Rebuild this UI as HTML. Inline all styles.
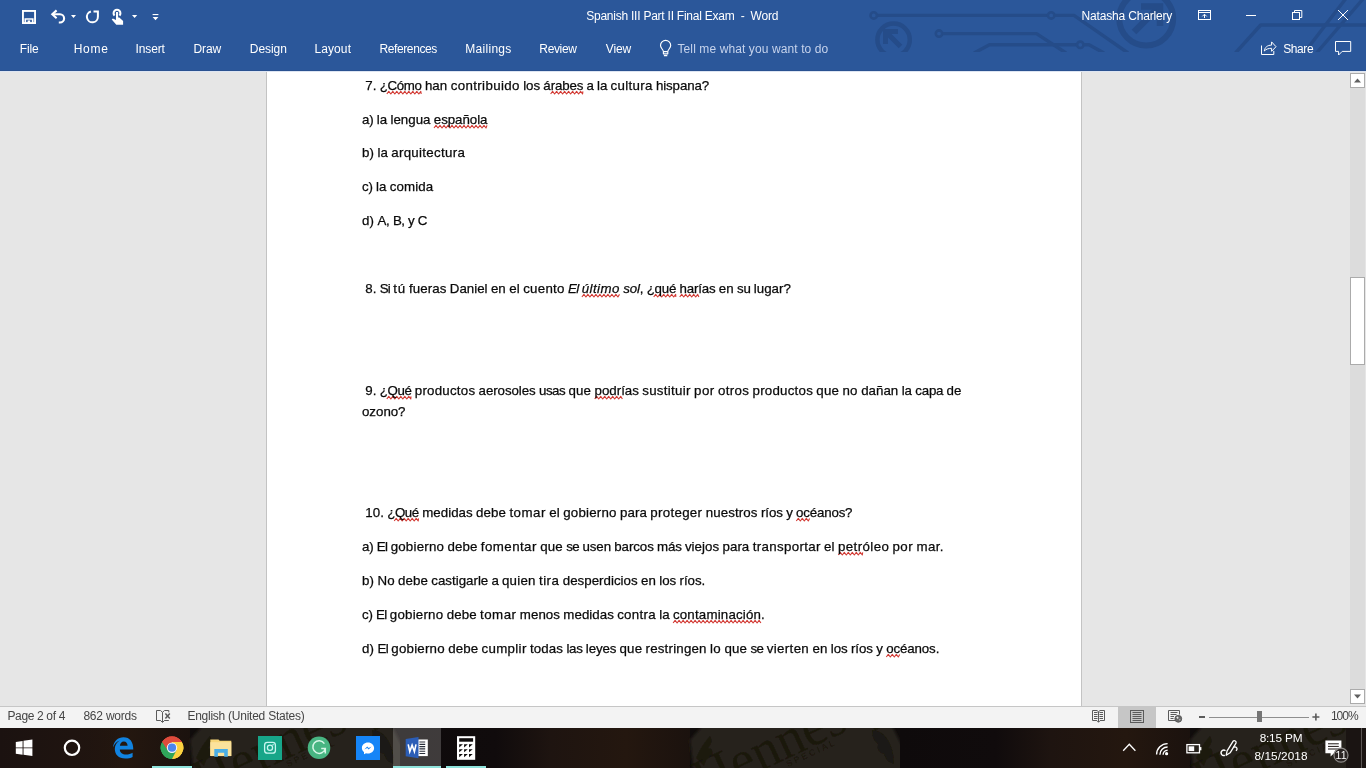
<!DOCTYPE html>
<html lang="en">
<head>
<meta charset="utf-8">
<title>Spanish III Part II Final Exam - Word</title>
<style>
html,body{margin:0;padding:0;}
body{width:1366px;height:768px;overflow:hidden;position:relative;background:#e6e6e6;font-family:"Liberation Sans",sans-serif;}
.abs{position:absolute;}
.t{position:absolute;white-space:nowrap;font-family:"Liberation Sans",sans-serif;}
.t i{font-style:italic;}
#titlebar{left:0;top:0;width:1366px;height:71px;background:#2b579a;overflow:hidden;box-sizing:border-box;border-bottom:1px solid #2a5190;}
#tbline{left:0;top:71px;width:1366px;height:1px;background:#dde5f2;}
#docbg{left:0;top:71px;width:1366px;height:635px;background:#e6e6e6;}
#page{left:266px;top:71px;width:816px;height:635px;background:#ffffff;border-left:1px solid #c3c3c3;border-right:1px solid #c3c3c3;box-sizing:border-box;}
#vtrack{left:1350px;top:73px;width:15px;height:631px;background:#dcdcdc;}
#vgap{left:1365px;top:71px;width:1px;height:635px;background:#e6e6e6;}
.sbtn{position:absolute;left:1350px;width:15px;height:15px;box-sizing:border-box;background:#ffffff;border:1px solid #ababab;}
#vthumb{left:1350px;top:277px;width:15px;height:88px;box-sizing:border-box;background:#ffffff;border:1px solid #ababab;}
#status{left:0;top:706px;width:1366px;height:22px;background:#f3f3f3;border-top:1px solid #c6c6c6;box-sizing:border-box;}
#taskbar{left:0;top:728px;width:1366px;height:40px;background:#15100e;overflow:hidden;}
svg{position:absolute;overflow:visible;}
.sqsvg{left:0;top:0;pointer-events:none;}
.b{font-size:13.3px;line-height:13.3px;color:#0a0a0a;-webkit-text-stroke:0.25px #0a0a0a;}
.sqsvg path{fill:none;stroke:#d23a34;stroke-width:1.1;stroke-linejoin:round;}
</style>
</head>
<body>
<div id="docbg" class="abs"></div>
<div id="page" class="abs"></div>
<div id="vtrack" class="abs"></div>
<div id="vgap" class="abs"></div>
<div class="sbtn" style="top:73px;"></div>
<div id="vthumb" class="abs"></div>
<div class="sbtn" style="top:689px;"></div>
<svg width="1366" height="768" viewBox="0 0 1366 768" style="left:0;top:0">
<path d="M1354 82.5 h7 l-3.5 -4z M1354 694.5 h7 l-3.5 4z" fill="#606060"/>
</svg>
<div id="titlebar" class="abs">
<svg width="1366" height="52" viewBox="0 0 1366 52" style="left:0;top:0;overflow:hidden">
<g fill="none" stroke="#254c89" stroke-width="3.4" stroke-linejoin="round">
<path d="M877 15.4 H1048"/><circle cx="873.7" cy="15.4" r="3.2" stroke-width="2.6"/><circle cx="1051.2" cy="15.4" r="3.2" stroke-width="2.6"/>
<path d="M1054.5 15.4 H1074 L1128 53"/>
<circle cx="939" cy="33.6" r="3.2" stroke-width="2.6"/><path d="M942.3 33.6 H1036.5 L1066 53"/>
<path d="M974 53 L989.5 44.8 H1077"/><circle cx="1080.3" cy="44.8" r="3.2" stroke-width="2.6"/><path d="M1083.6 44.8 H1089 L1104 53"/>
<circle cx="1146.2" cy="18.6" r="27" stroke-width="6"/>
<path d="M1134 32 L1158 8" stroke-width="6.5"/><path d="M1141 6.5 H1160 V26" stroke-width="6.5" stroke-linejoin="miter"/>
<circle cx="893.6" cy="39.8" r="16.2" stroke-width="4.5"/>
<path d="M900.5 46.5 L887 33" stroke-width="5"/><path d="M885.5 44 V31.5 H898" stroke-width="5" stroke-linejoin="miter"/>
<path d="M1235.5 53 L1260.7 25 H1366"/>
<path d="M1304 53 L1345.5 -1"/>
<path d="M1316.5 53 L1363 -1"/>
</g></svg>
</div>
<div id="tbline" class="abs"></div>
<svg width="1366" height="70" viewBox="0 0 1366 70" style="left:0;top:0">
<g fill="none" stroke="#fff" stroke-width="1.9">
<rect x="22.95" y="10.95" width="12.1" height="12.1"/>
<path d="M25.3 23 V19 H32.7 V23" stroke-width="1.7"/>
</g>
<rect x="27.6" y="20.4" width="2.6" height="3" fill="#fff"/>
<g fill="none" stroke="#fff" stroke-width="2.1" stroke-linejoin="miter">
<path d="M56.6 10.4 L52.3 14.3 L56.6 18.2"/>
<path d="M53 14.3 H60 A4.1 4.1 0 0 1 60 22.5 H58.8"/>
<path d="M90.9 11.5 A5.5 5.5 0 1 0 97.9 16.6 V11.6 H93.5" stroke-width="2"/>
</g>
<path d="M71 15 h5 l-2.5 3z M132 15 h5.2 l-2.6 3z M152.6 17 h5.8 l-2.9 3.2z" fill="#fff"/>
<rect x="152.6" y="14" width="5.8" height="1.1" fill="#fff"/>
<g>
<path d="M114.6 15.6 A3.4 3.4 0 1 1 119.4 15.6" fill="none" stroke="#fff" stroke-width="2.1"/>
<path d="M116 12 h2.1 v5.5 h1.2 l3.8 3.4 v3.8 h-6.8 l-4.6 -5.3 l1.2 -1 l3.1 1.6z" fill="#fff"/>
</g>
<g fill="none" stroke="#fff" stroke-width="1.15" stroke-linejoin="round">
<path d="M665.6 40.4 a5.1 5.1 0 0 1 5.1 5.1 c0 2.2 -2.6 4.2 -2.9 6 v2.3 h-4.4 v-2.3 c-0.3 -1.8 -2.9 -3.8 -2.9 -6 a5.1 5.1 0 0 1 5.1 -5.1z"/>
<path d="M663.4 51.6 h4.4 M663.9 55.6 h3.4"/>
</g>
<g fill="none" stroke="#fff" stroke-width="1">
<rect x="1198.5" y="10.5" width="12" height="9"/><path d="M1198.5 12.5 h12 M1204.5 18 v-3.6 M1202.3 16.4 l2.2 -2.2 l2.2 2.2"/>
<path d="M1246 15.5 h10"/>
<rect x="1292.5" y="12.5" width="7" height="7"/><path d="M1294.5 12.5 v-2 h7.3 v7 h-2.3"/>
<path d="M1338 10 l10 10 M1348 10 l-10 10"/>
<path d="M1261.5 45.5 v9 h12.3 v-3.6"/>
<path d="M1264.3 51 c0.4 -3.6 3 -5.8 7.3 -5.9 v-3.2 l4.4 4.8 l-4.4 4.6 v-3 c-3.2 0 -5.4 0.8 -7.3 2.7z" stroke-linejoin="round"/>
<path d="M1335.5 41.5 h15.2 v9.9 h-8.5 l-3.6 3.6 v-3.6 h-3.1z" stroke-linejoin="miter"/>
</g>
</svg>
<div id="status" class="abs"></div>
<div class="abs" style="left:1118px;top:707px;width:38px;height:21px;background:#c6c6c6;"></div>
<svg width="1366" height="768" viewBox="0 0 1366 768" style="left:0;top:0">
<g fill="none" stroke="#5a5a5a" stroke-width="1">
<path d="M162.5 712.3 V722 M160.6 720.6 L162.5 722.5 L164.4 720.6"/>
<path d="M162.5 712.3 L160.5 710.5 H156.5 V720.5 H160.8"/>
<path d="M162.5 712.3 L164.5 710.5 H168.8 V712.4 M164.2 720.5 H168.8"/>
<path d="M165.4 713.4 L169.8 718.4 M169.8 713.4 L165.4 718.4" stroke-width="1.5"/>
<!-- read mode -->
<path d="M1098.5 711.6 V722 M1096.7 720.4 L1098.5 722.3 L1100.3 720.4"/>
<path d="M1098.5 711.8 L1097 710.5 H1092.5 V720.5 H1097"/>
<path d="M1098.5 711.8 L1100 710.5 H1104.5 V720.5 H1100"/>
<path d="M1094 712.5 h3.5 M1094 714.5 h3.5 M1094 716.5 h3.5 M1094 718.5 h3.5 M1099.5 712.5 h3.5 M1099.5 714.5 h3.5 M1099.5 716.5 h3.5 M1099.5 718.5 h3.5"/>
<!-- print layout -->
<rect x="1130.5" y="710.5" width="13" height="12"/>
<path d="M1132.5 712.5 h9 M1132.5 714.5 h9 M1132.5 716.5 h9 M1132.5 718.5 h9 M1132.5 720.5 h9"/>
<!-- web layout -->
<path d="M1175 720.5 H1168.5 V710.5 H1179.5 V714.5"/>
<path d="M1170.5 712.5 h7 M1170.5 714.5 h6 M1170.5 716.5 h3.5 M1170.5 718.5 h3"/>
</g>
<circle cx="1178.3" cy="718.8" r="3.4" fill="#6a6a6a" stroke="#5a5a5a"/>
<path d="M1176.3 717.2 l1.6 -0.6 l0.8 1.4 l-1.2 1 z M1179 719.6 l1.4 -0.4 l-0.4 1.6z" fill="#e8e8e8"/>
<!-- zoom slider -->
<rect x="1199" y="716" width="6" height="2" fill="#5a5a5a"/>
<rect x="1209" y="717" width="100" height="1" fill="#8e8e8e"/>
<rect x="1257" y="711" width="5" height="11" fill="#757575"/>
<path d="M1312.4 717 h7 M1315.9 713.5 v7" stroke="#5a5a5a" stroke-width="1.6" fill="none"/>
</svg>
<div id="taskbar" class="abs">
<svg width="1366" height="40" viewBox="0 0 1366 40" style="left:0;top:0;overflow:hidden">
<defs>
<linearGradient id="g1" x1="0" x2="1" y1="0" y2="0"><stop offset="0" stop-color="#0e0a0b"/><stop offset="0.33" stop-color="#100b0c"/><stop offset="0.52" stop-color="#1e1410"/><stop offset="0.78" stop-color="#24170f"/><stop offset="1" stop-color="#1b120e"/></linearGradient>
<linearGradient id="g0" x1="0" x2="1" y1="0" y2="0"><stop offset="0" stop-color="#1b1210"/><stop offset="0.6" stop-color="#1f1410"/><stop offset="1" stop-color="#1f1410" stop-opacity="0"/></linearGradient>
<filter id="bl" x="-10%" y="-60%" width="120%" height="220%"><feGaussianBlur stdDeviation="1.6"/></filter>
<filter id="bl2" x="-10%" y="-60%" width="120%" height="220%"><feGaussianBlur stdDeviation="0.7"/></filter>
</defs>
<rect x="0" y="0" width="1366" height="40" fill="#100c0c"/>
<g transform="translate(0 0)">
<rect x="-100" y="0" width="290" height="40" fill="url(#g1)"/>
<path d="M194 46 L190 12 L206 -6 H390 L402 18 L406 46 Z" fill="#27231a" filter="url(#bl)"/>
<g filter="url(#bl2)" fill="#16120b">
<text font-family="Liberation Serif, serif" font-size="54" transform="translate(203 70) rotate(-25)" opacity="0.62">Hennessy</text>
<text font-family="Liberation Sans, sans-serif" font-size="8.5" letter-spacing="2.6" transform="translate(288 39) rotate(-25)" opacity="0.7">SPECIAL</text>
<path d="M196 30 q6 -14 14 -22 q4 6 -2 12 q6 0 4 8 q-6 2 -8 10z" opacity="0.55"/>
<path d="M372 2 q10 0 16 10 q6 10 6 24 q-8 -2 -10 -10 q-8 -2 -6 -10 q-6 -4 -6 -14z" opacity="0.6"/>
</g>
</g><g transform="translate(500 0)">
<rect x="-100" y="0" width="290" height="40" fill="url(#g1)"/>
<path d="M194 46 L190 12 L206 -6 H390 L402 18 L406 46 Z" fill="#27231a" filter="url(#bl)"/>
<g filter="url(#bl2)" fill="#16120b">
<text font-family="Liberation Serif, serif" font-size="54" transform="translate(203 70) rotate(-25)" opacity="0.62">Hennessy</text>
<text font-family="Liberation Sans, sans-serif" font-size="8.5" letter-spacing="2.6" transform="translate(288 39) rotate(-25)" opacity="0.7">SPECIAL</text>
<path d="M196 30 q6 -14 14 -22 q4 6 -2 12 q6 0 4 8 q-6 2 -8 10z" opacity="0.55"/>
<path d="M372 2 q10 0 16 10 q6 10 6 24 q-8 -2 -10 -10 q-8 -2 -6 -10 q-6 -4 -6 -14z" opacity="0.6"/>
</g>
</g><g transform="translate(1000 0)">
<rect x="-100" y="0" width="290" height="40" fill="url(#g1)"/>
<path d="M194 46 L190 12 L206 -6 H390 L402 18 L406 46 Z" fill="#27231a" filter="url(#bl)"/>
<g filter="url(#bl2)" fill="#16120b">
<text font-family="Liberation Serif, serif" font-size="54" transform="translate(203 70) rotate(-25)" opacity="0.62">Hennessy</text>
<text font-family="Liberation Sans, sans-serif" font-size="8.5" letter-spacing="2.6" transform="translate(288 39) rotate(-25)" opacity="0.7">SPECIAL</text>
<path d="M196 30 q6 -14 14 -22 q4 6 -2 12 q6 0 4 8 q-6 2 -8 10z" opacity="0.55"/>
<path d="M372 2 q10 0 16 10 q6 10 6 24 q-8 -2 -10 -10 q-8 -2 -6 -10 q-6 -4 -6 -14z" opacity="0.6"/>
</g>
</g>
<rect x="0" y="0" width="120" height="40" fill="url(#g0)"/>
<rect x="393" y="0" width="48" height="40" fill="#ffffff" opacity="0.2"/>
<rect x="1346" y="0" width="20" height="40" fill="#1a1412"/>
<rect x="1361" y="0" width="1" height="40" fill="#5a5553"/>
</svg>
</div>
<svg width="1366" height="40" viewBox="0 728 1366 40" style="left:0;top:728px">
<!-- underlines -->
<g fill="#8fe3dc"><rect x="152" y="766" width="40" height="2"/><rect x="393" y="766" width="48" height="2"/><rect x="446" y="766" width="40" height="2"/></g>
<!-- windows -->
<path d="M15.8 741.9 L22.6 741 V747.4 H15.8z M23.5 740.8 L32.4 739.6 V747.4 H23.5z M15.8 748.3 H22.6 V754.7 L15.8 753.8z M23.5 748.3 H32.4 V756 L23.5 754.8z" fill="#fff"/>
<!-- cortana -->
<circle cx="72" cy="747.8" r="7.2" fill="none" stroke="#fff" stroke-width="2.2"/>
<!-- edge -->
<path d="M113 747.5 C113.6 741 118 737.2 123.5 737.2 C130 737.2 133.4 742 133.3 749.6 H119.8 C120 753 122.5 754.6 126 754.6 C128.6 754.6 130.8 753.8 132.6 752.7 V757 C130.6 758 128.2 758.6 125.3 758.6 C118.6 758.6 114.8 754.6 114.8 748.8 C114.8 745 116.8 742 119.8 740.4 C116.6 741.4 114.4 743.8 113 747.5 Z M119.9 745.8 H127.6 C127.5 743.2 126.2 741.6 123.8 741.6 C121.6 741.6 120.2 743.3 119.9 745.8Z" fill="#1183e0"/>
<!-- chrome -->
<g>
<circle cx="172" cy="747.7" r="10.8" fill="#fff"/>
<path d="M172 747.7 L162.2 742.05 A11.3 11.3 0 0 1 181.8 742.05 Z" fill="#de4b3c"/>
<path d="M162.2 742.05 A11.3 11.3 0 0 1 181.8 742.05 L172 742.05Z" fill="#de4b3c"/>
<path d="M172 747.7 L181.8 742.05 A11.3 11.3 0 0 1 172 759 Z" fill="#fdd140"/>
<path d="M172 747.7 L172 759 A11.3 11.3 0 0 1 162.2 742.05 Z" fill="#2fa55a"/>
<path d="M172 747.7 L176.5 750.3 L172 759 A11.3 11.3 0 0 0 181.8 742.05 H172z" fill="#fdd140"/>
<path d="M172 747.7 L167.6 750.2 L162.2 742.05 A11.3 11.3 0 0 0 172 759 L176.5 750.3z" fill="#2fa55a"/>
<path d="M162.2 742.05 A11.3 11.3 0 0 1 181.8 742.05 H172 L167.6 750.2z" fill="#de4b3c"/>
<circle cx="172" cy="747.7" r="5.2" fill="#f4f6fa"/>
<circle cx="172" cy="747.7" r="4.1" fill="#4b86ee"/>
</g>
<!-- file explorer -->
<path d="M210.3 739.6 h8.2 l1.2 1.1 h11.6 v15.4 h-21z" fill="#f7d679"/>
<path d="M210.3 742.2 h21 v13.9 h-21z" fill="#fbe29c"/>
<path d="M214.3 756.8 v-7.8 h13.5 v7.8 h-3.6 v-4.1 h-6.3 v4.1z" fill="#4aaee6"/>
<!-- instagram -->
<rect x="258" y="736" width="24" height="24" fill="#17a689"/>
<rect x="264.6" y="742.4" width="10.8" height="10.8" rx="2.8" fill="none" stroke="#c8f6f0" stroke-width="1.3"/>
<circle cx="270" cy="747.8" r="2.6" fill="none" stroke="#c8f6f0" stroke-width="1.3"/><circle cx="273.1" cy="744.7" r="0.7" fill="#c8f6f0"/>
<!-- grammarly -->
<circle cx="319" cy="747.8" r="11.3" fill="#48b582"/>
<path d="M324.4 743.6 A6.3 6.3 0 1 0 325.3 748.4 H321.2 M325.3 748.4 V753.4" fill="none" stroke="#d6f6e6" stroke-width="1.5"/>
<!-- messenger -->
<rect x="356" y="736" width="24" height="24" fill="#1585f7"/>
<path d="M368 742.4 c-3.5 0 -6.1 2.4 -6.1 5.5 c0 1.7 0.8 3.2 2.1 4.2 v2.2 l2 -1.1 c0.6 0.2 1.3 0.3 2 0.3 c3.5 0 6.1 -2.4 6.1 -5.5 c0 -3.1 -2.6 -5.6 -6.1 -5.6z" fill="#fff"/>
<path d="M364.3 749.6 l2.9 -3.1 l1.5 1.5 l2.9 -1.5 l-2.9 3.1 l-1.5 -1.5z" fill="#1585f7"/>
<!-- word -->
<rect x="418" y="739.5" width="9.8" height="16.6" fill="#fff"/>
<path d="M419.4 742 h5.8 M419.4 744.3 h5.8 M419.4 746.6 h5.8 M419.4 748.9 h5.8 M419.4 751.2 h5.8 M419.4 753.5 h5.8" stroke="#2a2f3a" stroke-width="1.15"/>
<path d="M405.7 739 L418.5 737 V758.3 L405.7 756.3z" fill="#2b5db6"/>
<path d="M408.2 744.4 l1.6 7.2 l2.3 -6.4 l2.3 6.4 l1.6 -7.2" fill="none" stroke="#fff" stroke-width="1.6" stroke-linejoin="miter"/>
<!-- calculator -->
<rect x="457" y="736.2" width="18.2" height="23.6" fill="#fff"/>
<rect x="459.2" y="738.2" width="13.9" height="3.5" fill="#0e0b0b"/>
<g fill="#0e0b0b">
<path d="M459.2 744.3 h3.7 l-3.7 3.1z M464.1 744.3 h3.7 l-3.7 3.1z M469 744.3 h3.7 l-3.7 3.1z"/>
<path d="M459.2 749.2 h3.7 l-3.7 3.1z M464.1 749.2 h3.7 l-3.7 3.1z M469 749.2 h3.7 l-3.7 3.1z"/>
<path d="M459.2 754.1 h3.7 l-3.7 3.1z M464.1 754.1 h3.7 l-3.7 3.1z M469 754.1 h3.7 l-3.7 3.1z"/>
</g>
<!-- tray -->
<g fill="none" stroke="#fff" stroke-width="1.3">
<path d="M1123.2 750.7 L1129.3 744.3 L1135.4 750.7"/>
<path d="M1156.6 754.6 A11 11 0 0 1 1167.6 743.6" stroke-width="1.4"/>
<path d="M1159.9 754.7 A7.7 7.7 0 0 1 1167.6 747" stroke-width="1.4"/>
<path d="M1163.1 754.8 A4.5 4.5 0 0 1 1167.6 750.3" stroke-width="1.4"/>
<rect x="1186.9" y="744.6" width="12.6" height="8.2" stroke-width="1.3"/>
<path d="M1224.9 755.3 a2.7 2.7 0 1 1 0.6 -4.6" stroke-width="1.4"/>
<path d="M1226.2 755.2 l0.9 -4.3 l5.9 -9.6 a1.8 1.8 0 0 1 3 1.9 l-5.9 9.6z" stroke-width="1.3" stroke-linejoin="round"/>
<path d="M1233.3 747.6 a2.1 2.1 0 1 1 2.6 3.2" stroke-width="1.3"/>
</g>
<circle cx="1166.6" cy="753.7" r="1.6" fill="#fff"/>
<rect x="1188.6" y="746.3" width="5.6" height="4.8" fill="#fff"/><rect x="1199.9" y="747.1" width="1.5" height="3.2" fill="#fff"/>
<path d="M1325.4 740.6 h16 v12.6 h-7.4 l-3.4 3.2 v-3.2 h-5.2z" fill="#fff"/>
<path d="M1328 743.8 h10.8 M1328 746.4 h10.8 M1328 749 h10.8" stroke="#1c1512" stroke-width="1"/>
<circle cx="1341" cy="755.2" r="7" fill="#2a2422" stroke="#8d8a88" stroke-width="1.2"/>
</svg>
<svg class="sqsvg" width="1366" height="768" viewBox="0 0 1366 768"><path d="M386.8 94.0 L388.8 91.4 L390.8 94.0 L392.8 91.4 L394.8 94.0 L396.8 91.4 L398.8 94.0 L400.8 91.4 L402.8 94.0 L404.8 91.4 L406.8 94.0 L408.8 91.4 L410.8 94.0 L412.8 91.4 L414.8 94.0 L416.8 91.4 L418.8 94.0 L420.8 91.4 L421.2 94.0"/><path d="M550.6 94.0 L552.6 91.4 L554.6 94.0 L556.6 91.4 L558.6 94.0 L560.6 91.4 L562.6 94.0 L564.6 91.4 L566.6 94.0 L568.6 91.4 L570.6 94.0 L572.6 91.4 L574.6 94.0 L576.6 91.4 L578.6 94.0 L580.6 91.4 L582.6 94.0 L582.9 91.4"/><path d="M434.0 128.0 L436.0 125.4 L438.0 128.0 L440.0 125.4 L442.0 128.0 L444.0 125.4 L446.0 128.0 L448.0 125.4 L450.0 128.0 L452.0 125.4 L454.0 128.0 L456.0 125.4 L458.0 128.0 L460.0 125.4 L462.0 128.0 L464.0 125.4 L466.0 128.0 L468.0 125.4 L470.0 128.0 L472.0 125.4 L474.0 128.0 L476.0 125.4 L478.0 128.0 L480.0 125.4 L482.0 128.0 L484.0 125.4 L486.0 128.0 L487.0 125.4"/><path d="M581.9 297.0 L583.9 294.4 L585.9 297.0 L587.9 294.4 L589.9 297.0 L591.9 294.4 L593.9 297.0 L595.9 294.4 L597.9 297.0 L599.9 294.4 L601.9 297.0 L603.9 294.4 L605.9 297.0 L607.9 294.4 L609.9 297.0 L611.9 294.4 L613.9 297.0 L615.9 294.4 L617.9 297.0 L619.5 294.4"/><path d="M653.7 297.0 L655.7 294.4 L657.7 297.0 L659.7 294.4 L661.7 297.0 L663.7 294.4 L665.7 297.0 L667.7 294.4 L669.7 297.0 L671.7 294.4 L673.7 297.0 L675.7 294.4 L675.8 297.0"/><path d="M679.7 297.0 L681.7 294.4 L683.7 297.0 L685.7 294.4 L687.7 297.0 L689.7 294.4 L691.7 297.0 L693.7 294.4 L695.7 297.0 L697.7 294.4 L698.9 297.0"/><path d="M386.8 399.0 L388.8 396.4 L390.8 399.0 L392.8 396.4 L394.8 399.0 L396.8 396.4 L398.8 399.0 L400.8 396.4 L402.8 399.0 L404.8 396.4 L406.8 399.0 L408.8 396.4 L410.8 399.0 L411.0 396.4"/><path d="M594.7 399.0 L596.7 396.4 L598.7 399.0 L600.7 396.4 L602.7 399.0 L604.7 396.4 L606.7 399.0 L608.7 396.4 L610.7 399.0 L612.7 396.4 L614.7 399.0 L616.7 396.4 L618.7 399.0 L620.7 396.4 L622.4 399.0"/><path d="M394.2 521.0 L396.2 518.4 L398.2 521.0 L400.2 518.4 L402.2 521.0 L404.2 518.4 L406.2 521.0 L408.2 518.4 L410.2 521.0 L412.2 518.4 L414.2 521.0 L416.2 518.4 L418.2 521.0 L418.5 518.4"/><path d="M796.3 521.0 L798.3 518.4 L800.3 521.0 L802.3 518.4 L804.3 521.0 L806.3 518.4 L808.3 521.0 L809.6 518.4"/><path d="M838.3 555.0 L840.3 552.4 L842.3 555.0 L844.3 552.4 L846.3 555.0 L848.3 552.4 L850.3 555.0 L852.3 552.4 L854.3 555.0 L856.3 552.4 L858.3 555.0 L860.3 552.4 L862.3 555.0 L862.7 552.4"/><path d="M673.1 623.0 L675.1 620.4 L677.1 623.0 L679.1 620.4 L681.1 623.0 L683.1 620.4 L685.1 623.0 L687.1 620.4 L689.1 623.0 L691.1 620.4 L693.1 623.0 L695.1 620.4 L697.1 623.0 L699.1 620.4 L701.1 623.0 L703.1 620.4 L705.1 623.0 L707.1 620.4 L709.1 623.0 L711.1 620.4 L713.1 623.0 L715.1 620.4 L717.1 623.0 L719.1 620.4 L721.1 623.0 L723.1 620.4 L725.1 623.0 L727.1 620.4 L729.1 623.0 L731.1 620.4 L733.1 623.0 L735.1 620.4 L737.1 623.0 L739.1 620.4 L741.1 623.0 L743.1 620.4 L745.1 623.0 L747.1 620.4 L749.1 623.0 L751.1 620.4 L753.1 623.0 L755.1 620.4 L757.1 623.0 L759.1 620.4 L760.9 623.0"/><path d="M886.3 657.0 L888.3 654.4 L890.3 657.0 L892.3 654.4 L894.3 657.0 L896.3 654.4 L898.3 657.0 L899.7 654.4"/></svg>
<div id="txt" style="position:absolute;left:0;top:0;width:1366px;height:768px;will-change:transform;">
<div id="t_title" class="t" style="left:586.22px;top:9.64px;font-size:12px;line-height:12px;color:#ffffff;letter-spacing:-0.238px">Spanish III Part II Final Exam&nbsp; -&nbsp; Word</div>
<div id="t_user" class="t" style="left:1081.58px;top:9.64px;font-size:12px;line-height:12px;color:#ffffff;letter-spacing:-0.177px">Natasha Charlery</div>
<div id="t_file" class="t" style="left:19.70px;top:42.54px;font-size:12px;line-height:12px;color:#ffffff;letter-spacing:-0.112px">File</div>
<div id="t_home" class="t" style="left:73.70px;top:42.54px;font-size:12px;line-height:12px;color:#ffffff;letter-spacing:0.767px">Home</div>
<div id="t_insert" class="t" style="left:135.57px;top:42.54px;font-size:12px;line-height:12px;color:#ffffff;letter-spacing:-0.124px">Insert</div>
<div id="t_draw" class="t" style="left:193.41px;top:42.54px;font-size:12px;line-height:12px;color:#ffffff;letter-spacing:-0.056px">Draw</div>
<div id="t_design" class="t" style="left:249.80px;top:42.54px;font-size:12px;line-height:12px;color:#ffffff;letter-spacing:-0.064px">Design</div>
<div id="t_layout" class="t" style="left:314.41px;top:42.54px;font-size:12px;line-height:12px;color:#ffffff;letter-spacing:0.106px">Layout</div>
<div id="t_ref" class="t" style="left:379.58px;top:42.54px;font-size:12px;line-height:12px;color:#ffffff;letter-spacing:-0.410px">References</div>
<div id="t_mail" class="t" style="left:465.33px;top:42.54px;font-size:12px;line-height:12px;color:#ffffff;letter-spacing:0.284px">Mailings</div>
<div id="t_review" class="t" style="left:539.36px;top:42.54px;font-size:12px;line-height:12px;color:#ffffff;letter-spacing:-0.362px">Review</div>
<div id="t_view" class="t" style="left:605.76px;top:42.54px;font-size:12px;line-height:12px;color:#ffffff;letter-spacing:-0.101px">View</div>
<div id="t_tell" class="t" style="left:677.49px;top:42.54px;font-size:12px;line-height:12px;color:#c6d3ec;letter-spacing:0.105px">Tell me what you want to do</div>
<div id="t_share" class="t" style="left:1283.22px;top:42.54px;font-size:12px;line-height:12px;color:#ffffff;letter-spacing:-0.416px">Share</div>
<div id="s_page" class="t" style="left:7.41px;top:709.74px;font-size:12px;line-height:12px;color:#444444;letter-spacing:-0.347px">Page 2 of 4</div>
<div id="s_words" class="t" style="left:83.40px;top:709.74px;font-size:12px;line-height:12px;color:#444444;letter-spacing:-0.214px">862 words</div>
<div id="s_lang" class="t" style="left:187.40px;top:709.74px;font-size:12px;line-height:12px;color:#444444;letter-spacing:-0.248px">English (United States)</div>
<div id="s_zoom" class="t" style="left:1330.91px;top:709.74px;font-size:12px;line-height:12px;color:#444444;letter-spacing:-1.001px">100%</div>
<div id="k_time" class="t" style="left:1259.67px;top:732.91px;font-size:11.8px;line-height:11.8px;color:#ffffff;letter-spacing:-0.188px">8:15 PM</div>
<div id="k_date" class="t" style="left:1254.48px;top:750.61px;font-size:11.8px;line-height:11.8px;color:#ffffff;letter-spacing:0.061px">8/15/2018</div>
<div id="k_badge" class="t" style="left:1335.60px;top:750.31px;font-size:10.5px;line-height:10.5px;color:#ffffff;letter-spacing:0.094px">11</div>
<div id="w0_1" class="t b" style="left:365.32px;top:78.74px;letter-spacing:0.021px">7.</div>
<div id="w0_4" class="t b" style="left:379.77px;top:78.74px;letter-spacing:-0.358px">¿Cómo</div>
<div id="w0_10" class="t b" style="left:424.88px;top:78.74px;letter-spacing:0.083px">han</div>
<div id="w0_14" class="t b" style="left:450.64px;top:78.74px;letter-spacing:0.381px">contribuido</div>
<div id="w0_26" class="t b" style="left:523.20px;top:78.74px;letter-spacing:-0.054px">los</div>
<div id="w0_30" class="t b" style="left:543.36px;top:78.74px;letter-spacing:-0.128px">árabes</div>
<div id="w0_37" class="t b" style="left:586.58px;top:78.74px;letter-spacing:-0.381px">a</div>
<div id="w0_39" class="t b" style="left:596.92px;top:78.74px;letter-spacing:0.016px">la</div>
<div id="w0_42" class="t b" style="left:610.62px;top:78.74px;letter-spacing:0.301px">cultura</div>
<div id="w0_50" class="t b" style="left:655.97px;top:78.74px;letter-spacing:-0.115px">hispana?</div>
<div id="w1_0" class="t b" style="left:362.00px;top:112.74px;letter-spacing:-0.178px">a)</div>
<div id="w1_3" class="t b" style="left:376.79px;top:112.74px;letter-spacing:0.016px">la</div>
<div id="w1_6" class="t b" style="left:390.50px;top:112.74px;letter-spacing:0.011px">lengua</div>
<div id="w1_13" class="t b" style="left:433.82px;top:112.74px;letter-spacing:-0.048px">española</div>
<div id="w2_0" class="t b" style="left:362.00px;top:145.74px;letter-spacing:0.162px">b)</div>
<div id="w2_3" class="t b" style="left:377.47px;top:145.74px;letter-spacing:0.016px">la</div>
<div id="w2_6" class="t b" style="left:391.18px;top:145.74px;letter-spacing:0.322px">arquitectura</div>
<div id="w3_0" class="t b" style="left:362.00px;top:179.74px;letter-spacing:-0.215px">c)</div>
<div id="w3_3" class="t b" style="left:375.96px;top:179.74px;letter-spacing:0.016px">la</div>
<div id="w3_6" class="t b" style="left:389.67px;top:179.74px;letter-spacing:0.146px">comida</div>
<div id="w4_0" class="t b" style="left:362.00px;top:213.74px;letter-spacing:0.162px">d)</div>
<div id="w4_3" class="t b" style="left:377.47px;top:213.74px;letter-spacing:-0.216px">A,</div>
<div id="w4_6" class="t b" style="left:392.93px;top:213.74px;letter-spacing:-0.470px">B,</div>
<div id="w4_9" class="t b" style="left:407.88px;top:213.74px;letter-spacing:-0.018px">y</div>
<div id="w4_11" class="t b" style="left:417.84px;top:213.74px;letter-spacing:-1.789px">C</div>
<div id="w5_1" class="t b" style="left:365.32px;top:281.74px;letter-spacing:0.021px">8.</div>
<div id="w5_4" class="t b" style="left:379.77px;top:281.74px;letter-spacing:-0.862px">Si</div>
<div id="w5_7" class="t b" style="left:393.19px;top:281.74px;letter-spacing:0.762px">tú</div>
<div id="w5_10" class="t b" style="left:409.12px;top:281.74px;letter-spacing:0.064px">fueras</div>
<div id="w5_17" class="t b" style="left:449.79px;top:281.74px;letter-spacing:0.013px">Daniel</div>
<div id="w5_24" class="t b" style="left:490.89px;top:281.74px;letter-spacing:0.103px">en</div>
<div id="w5_27" class="t b" style="left:509.21px;top:281.74px;letter-spacing:0.152px">el</div>
<div id="w5_30" class="t b" style="left:523.19px;top:281.74px;letter-spacing:0.270px">cuento</div>
<div id="w5_37" class="t b" style="left:568.06px;top:281.74px;letter-spacing:-0.735px"><i>El</i></div>
<div id="w5_40" class="t b" style="left:581.69px;top:281.74px;letter-spacing:0.449px"><i>último</i></div>
<div id="w5_47" class="t b" style="left:623.13px;top:281.74px;letter-spacing:-0.119px"><i>sol</i>,</div>
<div id="w5_52" class="t b" style="left:646.67px;top:281.74px;letter-spacing:-0.202px">¿qué</div>
<div id="w5_57" class="t b" style="left:679.49px;top:281.74px;letter-spacing:-0.166px">harías</div>
<div id="w5_64" class="t b" style="left:718.78px;top:281.74px;letter-spacing:0.103px">en</div>
<div id="w5_67" class="t b" style="left:737.10px;top:281.74px;letter-spacing:-0.302px">su</div>
<div id="w5_70" class="t b" style="left:753.86px;top:281.74px;letter-spacing:-0.010px">lugar?</div>
<div id="w6_1" class="t b" style="left:365.32px;top:383.74px;letter-spacing:0.021px">9.</div>
<div id="w6_4" class="t b" style="left:379.77px;top:383.74px;letter-spacing:-0.399px">¿Qué</div>
<div id="w6_9" class="t b" style="left:414.75px;top:383.74px;letter-spacing:0.238px">productos</div>
<div id="w6_19" class="t b" style="left:478.62px;top:383.74px;letter-spacing:-0.068px">aerosoles</div>
<div id="w6_29" class="t b" style="left:538.97px;top:383.74px;letter-spacing:-0.472px">usas</div>
<div id="w6_34" class="t b" style="left:568.49px;top:383.74px;letter-spacing:0.174px">que</div>
<div id="w6_38" class="t b" style="left:594.52px;top:383.74px;letter-spacing:0.004px">podrías</div>
<div id="w6_46" class="t b" style="left:642.22px;top:383.74px;letter-spacing:0.305px">sustituir</div>
<div id="w6_56" class="t b" style="left:694.09px;top:383.74px;letter-spacing:0.445px">por</div>
<div id="w6_60" class="t b" style="left:717.96px;top:383.74px;letter-spacing:0.334px">otros</div>
<div id="w6_66" class="t b" style="left:752.51px;top:383.74px;letter-spacing:0.238px">productos</div>
<div id="w6_76" class="t b" style="left:816.37px;top:383.74px;letter-spacing:0.174px">que</div>
<div id="w6_80" class="t b" style="left:842.40px;top:383.74px;letter-spacing:0.322px">no</div>
<div id="w6_83" class="t b" style="left:861.15px;top:383.74px;letter-spacing:0.037px">dañan</div>
<div id="w6_89" class="t b" style="left:901.64px;top:383.74px;letter-spacing:0.016px">la</div>
<div id="w6_92" class="t b" style="left:915.35px;top:383.74px;letter-spacing:-0.221px">capa</div>
<div id="w6_97" class="t b" style="left:946.62px;top:383.74px;letter-spacing:0.103px">de</div>
<div id="w7_0" class="t b" style="left:362.00px;top:404.74px;letter-spacing:-0.021px">ozono?</div>
<div id="w8_1" class="t b" style="left:365.32px;top:505.74px;letter-spacing:0.023px">10.</div>
<div id="w8_5" class="t b" style="left:387.20px;top:505.74px;letter-spacing:-0.399px">¿Qué</div>
<div id="w8_10" class="t b" style="left:422.19px;top:505.74px;letter-spacing:0.041px">medidas</div>
<div id="w8_18" class="t b" style="left:476.05px;top:505.74px;letter-spacing:0.103px">debe</div>
<div id="w8_23" class="t b" style="left:509.38px;top:505.74px;letter-spacing:0.500px">tomar</div>
<div id="w8_29" class="t b" style="left:549.19px;top:505.74px;letter-spacing:0.152px">el</div>
<div id="w8_32" class="t b" style="left:563.17px;top:505.74px;letter-spacing:0.224px">gobierno</div>
<div id="w8_41" class="t b" style="left:620.05px;top:505.74px;letter-spacing:0.061px">para</div>
<div id="w8_46" class="t b" style="left:650.24px;top:505.74px;letter-spacing:0.318px">proteger</div>
<div id="w8_55" class="t b" style="left:705.63px;top:505.74px;letter-spacing:0.118px">nuestros</div>
<div id="w8_64" class="t b" style="left:760.89px;top:505.74px;letter-spacing:-0.055px">ríos</div>
<div id="w8_69" class="t b" style="left:786.15px;top:505.74px;letter-spacing:-0.018px">y</div>
<div id="w8_71" class="t b" style="left:796.11px;top:505.74px;letter-spacing:-0.180px">océanos?</div>
<div id="w9_0" class="t b" style="left:362.00px;top:539.74px;letter-spacing:-0.178px">a)</div>
<div id="w9_3" class="t b" style="left:376.79px;top:539.74px;letter-spacing:-0.650px">El</div>
<div id="w9_6" class="t b" style="left:390.63px;top:539.74px;letter-spacing:0.224px">gobierno</div>
<div id="w9_15" class="t b" style="left:447.51px;top:539.74px;letter-spacing:0.103px">debe</div>
<div id="w9_20" class="t b" style="left:480.83px;top:539.74px;letter-spacing:0.437px">fomentar</div>
<div id="w9_29" class="t b" style="left:540.13px;top:539.74px;letter-spacing:0.174px">que</div>
<div id="w9_33" class="t b" style="left:566.15px;top:539.74px;letter-spacing:-0.506px">se</div>
<div id="w9_36" class="t b" style="left:582.50px;top:539.74px;letter-spacing:-0.100px">usen</div>
<div id="w9_41" class="t b" style="left:614.26px;top:539.74px;letter-spacing:-0.067px">barcos</div>
<div id="w9_48" class="t b" style="left:657.10px;top:539.74px;letter-spacing:-0.216px">más</div>
<div id="w9_52" class="t b" style="left:684.89px;top:539.74px;letter-spacing:0.045px">viejos</div>
<div id="w9_59" class="t b" style="left:722.47px;top:539.74px;letter-spacing:0.061px">para</div>
<div id="w9_64" class="t b" style="left:752.66px;top:539.74px;letter-spacing:0.346px">transportar</div>
<div id="w9_76" class="t b" style="left:824.07px;top:539.74px;letter-spacing:0.152px">el</div>
<div id="w9_79" class="t b" style="left:838.05px;top:539.74px;letter-spacing:0.387px">petróleo</div>
<div id="w9_88" class="t b" style="left:892.53px;top:539.74px;letter-spacing:0.445px">por</div>
<div id="w9_92" class="t b" style="left:916.40px;top:539.74px;letter-spacing:0.421px">mar.</div>
<div id="w10_0" class="t b" style="left:362.00px;top:573.74px;letter-spacing:0.162px">b)</div>
<div id="w10_3" class="t b" style="left:377.47px;top:573.74px;letter-spacing:0.101px">No</div>
<div id="w10_6" class="t b" style="left:397.99px;top:573.74px;letter-spacing:0.103px">debe</div>
<div id="w10_11" class="t b" style="left:431.31px;top:573.74px;letter-spacing:0.003px">castigarle</div>
<div id="w10_22" class="t b" style="left:491.57px;top:573.74px;letter-spacing:-0.381px">a</div>
<div id="w10_24" class="t b" style="left:501.91px;top:573.74px;letter-spacing:0.247px">quien</div>
<div id="w10_30" class="t b" style="left:539.01px;top:573.74px;letter-spacing:0.483px">tira</div>
<div id="w10_35" class="t b" style="left:562.74px;top:573.74px;letter-spacing:0.026px">desperdicios</div>
<div id="w10_48" class="t b" style="left:641.03px;top:573.74px;letter-spacing:0.103px">en</div>
<div id="w10_51" class="t b" style="left:659.34px;top:573.74px;letter-spacing:-0.054px">los</div>
<div id="w10_55" class="t b" style="left:679.50px;top:573.74px;letter-spacing:-0.045px">ríos.</div>
<div id="w11_0" class="t b" style="left:362.00px;top:607.74px;letter-spacing:-0.215px">c)</div>
<div id="w11_3" class="t b" style="left:375.96px;top:607.74px;letter-spacing:-0.650px">El</div>
<div id="w11_6" class="t b" style="left:389.81px;top:607.74px;letter-spacing:0.224px">gobierno</div>
<div id="w11_15" class="t b" style="left:446.68px;top:607.74px;letter-spacing:0.103px">debe</div>
<div id="w11_20" class="t b" style="left:480.01px;top:607.74px;letter-spacing:0.500px">tomar</div>
<div id="w11_26" class="t b" style="left:519.82px;top:607.74px;letter-spacing:0.054px">menos</div>
<div id="w11_32" class="t b" style="left:563.33px;top:607.74px;letter-spacing:0.041px">medidas</div>
<div id="w11_40" class="t b" style="left:617.20px;top:607.74px;letter-spacing:0.287px">contra</div>
<div id="w11_47" class="t b" style="left:659.21px;top:607.74px;letter-spacing:0.016px">la</div>
<div id="w11_50" class="t b" style="left:672.92px;top:607.74px;letter-spacing:0.190px">contaminación.</div>
<div id="w12_0" class="t b" style="left:362.00px;top:641.74px;letter-spacing:0.162px">d)</div>
<div id="w12_3" class="t b" style="left:377.47px;top:641.74px;letter-spacing:-0.650px">El</div>
<div id="w12_6" class="t b" style="left:391.31px;top:641.74px;letter-spacing:0.224px">gobierno</div>
<div id="w12_15" class="t b" style="left:448.19px;top:641.74px;letter-spacing:0.103px">debe</div>
<div id="w12_20" class="t b" style="left:481.51px;top:641.74px;letter-spacing:0.331px">cumplir</div>
<div id="w12_28" class="t b" style="left:530.00px;top:641.74px;letter-spacing:0.117px">todas</div>
<div id="w12_34" class="t b" style="left:566.43px;top:641.74px;letter-spacing:-0.291px">las</div>
<div id="w12_38" class="t b" style="left:585.87px;top:641.74px;letter-spacing:-0.142px">leyes</div>
<div id="w12_44" class="t b" style="left:619.53px;top:641.74px;letter-spacing:0.174px">que</div>
<div id="w12_48" class="t b" style="left:645.55px;top:641.74px;letter-spacing:0.201px">restringen</div>
<div id="w12_59" class="t b" style="left:710.02px;top:641.74px;letter-spacing:0.370px">lo</div>
<div id="w12_62" class="t b" style="left:724.44px;top:641.74px;letter-spacing:0.174px">que</div>
<div id="w12_66" class="t b" style="left:750.46px;top:641.74px;letter-spacing:-0.506px">se</div>
<div id="w12_69" class="t b" style="left:766.81px;top:641.74px;letter-spacing:0.342px">vierten</div>
<div id="w12_77" class="t b" style="left:812.44px;top:641.74px;letter-spacing:0.103px">en</div>
<div id="w12_80" class="t b" style="left:830.76px;top:641.74px;letter-spacing:-0.054px">los</div>
<div id="w12_84" class="t b" style="left:850.91px;top:641.74px;letter-spacing:-0.055px">ríos</div>
<div id="w12_89" class="t b" style="left:876.18px;top:641.74px;letter-spacing:-0.018px">y</div>
<div id="w12_91" class="t b" style="left:886.13px;top:641.74px;letter-spacing:-0.104px">océanos.</div>
</div>
</body>
</html>
